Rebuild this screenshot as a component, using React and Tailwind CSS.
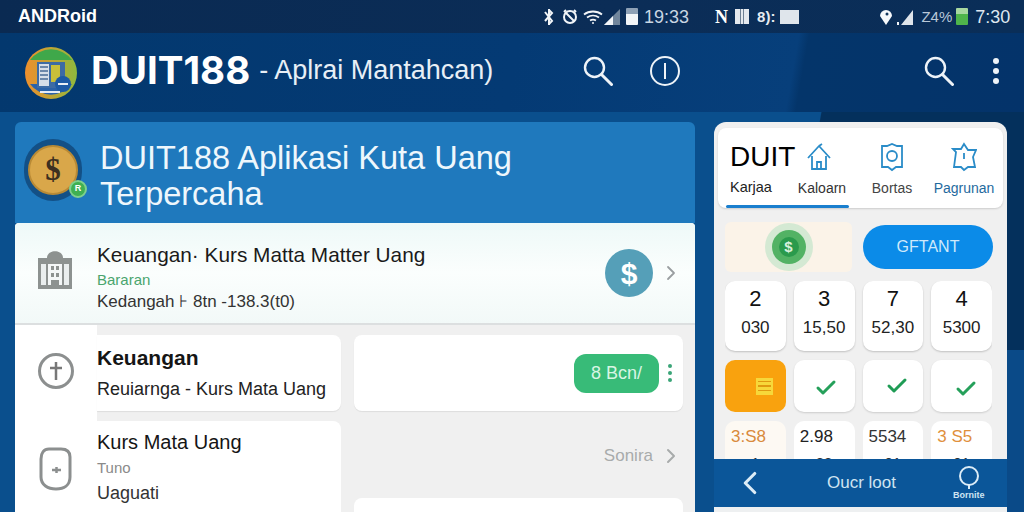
import React from 'react';
import { ChevronRight, ChevronLeft, Check } from 'lucide-react';

const SearchIcon = () => (
  <svg width="30" height="30" viewBox="0 0 30 30" fill="none" stroke="#eef3f8" strokeWidth="2.400" strokeLinecap="round">
    <circle cx="11.500" cy="11.500" r="9.500" />
    <path d="M18.500 18.500L28.500 28.500" strokeWidth="3" />
  </svg>
);

const StatusIcons = () => (
  <div className="flex items-center">
    <svg width="14" height="18" viewBox="0 0 14 18" className="ml-[542px]" fill="none" stroke="#f2f5f8" strokeWidth="2">
      <path d="M7 1v16M3 4l7 9-3 3M3 13l7-8-3-3" />
    </svg>
    <svg width="16" height="16" viewBox="0 0 16 16" className="ml-[6px]" fill="none" stroke="#f2f5f8" strokeWidth="2">
      <circle cx="8" cy="8" r="6" />
      <path d="M4 4l8 8M2 3l2-2M14 3l-2-2" />
    </svg>
    <svg width="20" height="14" viewBox="0 0 20 14" className="ml-[5px]" fill="none" stroke="#f2f5f8" strokeWidth="1.8">
      <path d="M1 4.500c5-4 13-4 18 0M4 7.500c3.500-2.500 8.500-2.500 12 0M7 10.500c2-1.200 4-1.200 6 0" />
      <circle cx="10" cy="13" r="1" fill="#f2f5f8" stroke="none" />
    </svg>
    <svg width="16" height="16" viewBox="0 0 16 16" className="ml-[1px]">
      <path d="M0 16L16 0v16z" fill="#71869c" />
      <path d="M0 16L9 7v9z" fill="#f2f5f8" />
    </svg>
    <div className="ml-[6px] w-[12px] h-[17px] bg-[#f2f5f8] rounded-[1px] border-t-[6px] border-[#8ea1b6]"></div>
    <span className="ml-[6px] text-[18px] leading-none text-[#c9d6e3]">19:33</span>
    <span className="ml-[26px] text-[18px] leading-none font-bold text-white font-['Liberation_Serif',serif]">N</span>
    <div className="ml-[7px] w-[14px] h-[15px] bg-[#e4e9ef] flex justify-center"><div className="w-[4px] h-full border-x border-[#6d7f93]"></div></div>
    <span className="ml-[8px] text-[15px] leading-none font-bold text-[#e6ebf1]">8):</span>
    <div className="ml-[5px] w-[19px] h-[14px] bg-[#dfe5eb]"></div>
    <svg width="14" height="16" viewBox="0 0 14 16" className="ml-[80px]">
      <path d="M7 16L1 7a5.500 5.500 0 1 1 12 0z" fill="#f7f9fb" />
      <circle cx="8" cy="5" r="1.500" fill="#14365c" />
    </svg>
    <svg width="18" height="16" viewBox="0 0 18 16" className="ml-[4px]">
      <path d="M0 16v-3h2v3z" fill="#f2f5f8" />
      <path d="M4 16L16 1v15z" fill="#dfe5eb" />
    </svg>
    <span className="ml-[6px] text-[15px] leading-none text-[#b9c8d8]">Z4%</span>
    <div className="ml-[4px] w-[12px] h-[17px] bg-[#4fb54b] rounded-[1px] border-t-[6px] border-[#a8d8a0]"></div>
    <span className="ml-[7px] text-[18px] leading-none text-[#dfe7ef]">7:30</span>
  </div>
);

const Logo = () => (
  <svg width="54" height="54" viewBox="0 0 54 54">
    <defs>
      <linearGradient id="lg" x1="0" y1="0" x2="1" y2="0">
        <stop offset="0" stopColor="#ef8f2c" />
        <stop offset="1" stopColor="#8fb93e" />
      </linearGradient>
    </defs>
    <circle cx="27" cy="27" r="26" fill="url(#lg)" />
    <path d="M6 14a26 26 0 0 1 42 0z" fill="#3fa84a" />
    <path d="M6 38h42a26 26 0 0 1-42 0z" fill="#2b62a8" />
    <rect x="13" y="16" width="28" height="26" fill="#3d6ba5" />
    <rect x="15" y="18" width="10" height="22" fill="#d7dee8" />
    <path d="M16 21h8M16 25h8M16 29h8M16 33h8" stroke="#4a6b95" strokeWidth="1.500" />
    <rect x="27" y="19" width="9" height="17" fill="#c9bf3a" />
    <circle cx="39" cy="38" r="8" fill="#1d5aa5" />
    <path d="M34 38h10" stroke="#e9eef5" strokeWidth="2" />
    <rect x="16" y="45" width="20" height="2" fill="#e5ecf5" />
  </svg>
);

const CoinBadge = () => (
  <div className="relative w-[58px] h-[62px] rounded-full bg-[#135086] flex items-center justify-center shrink-0">
    <div className="w-[50px] h-[50px] rounded-full bg-[#d9a74a] border-2 border-[#b98a35] flex items-center justify-center text-[31px] font-bold text-[#3d3020] font-['Liberation_Serif',serif]">$</div>
    <div className="absolute right-[-5px] bottom-[3px] w-[18px] h-[18px] rounded-full bg-[#3fb052] border-2 border-[#7fd08c] flex items-center justify-center text-[9px] font-bold text-white">R</div>
  </div>
);

const NumTile = ({ top, bottom }) => (
  <div className="h-[70px] rounded-[10px] bg-white shadow-[0_1px_2px_rgba(0,0,0,0.2)] flex flex-col items-center pt-[5px]">
    <span className="text-[22px] leading-[26px] text-[#111]">{top}</span>
    <span className="mt-[5px] text-[17px] leading-[22px] text-[#222]">{bottom}</span>
  </div>
);

const CheckTile = ({ cls }) => (
  <div className="h-[52px] rounded-[10px] bg-white shadow-[0_1px_2px_rgba(0,0,0,0.15)] flex items-center justify-center">
    <Check size={24} strokeWidth={3} className={cls} />
  </div>
);

const CutTile = ({ top, bottom, cls, bg }) => (
  <div className={`h-[60px] rounded-[10px] pt-[5px] px-[6px] flex flex-col ${bg}`}>
    <span className={`text-[17px] leading-[22px] ${cls}`}>{top}</span>
    <span className="mt-[5px] text-[15px] leading-[20px] text-center text-[#333]">{bottom}</span>
  </div>
);

const TopTab = ({ label, width, cls, children }) => (
  <div className={`flex flex-col items-center pt-[3px] ${width}`}>
    {children}
    <span className={`mt-[7px] text-[14px] leading-[16px] ${cls}`}>{label}</span>
  </div>
);

export default function App() {
  return (
    <div className="w-[1024px] h-[512px] overflow-hidden flex flex-col font-['Liberation_Sans',sans-serif] bg-[#0a4f8d]">
      <div className="h-[33px] shrink-0 bg-[linear-gradient(100deg,#0a2a52_0%,#0b2d57_60%,#0a2e58_100%)] flex items-center relative">
        <span className="absolute left-[18px] top-[6px] text-[18px] leading-[20px] font-bold text-white">ANDRoid</span>
        <StatusIcons />
      </div>

      <div className="h-[79px] shrink-0 flex items-center pb-[4px] bg-[linear-gradient(100deg,#03386e_0%,#043a74_50%,#073f7b_77%,#04356a_78%,#04336a_100%)]">
        <div className="ml-[24px] mt-[4px]"><Logo /></div>
        <span className="ml-[13px] text-[38.500px] leading-none font-bold text-white font-['Inter',sans-serif]">DUIT188</span>
        <span className="ml-[9px] text-[27px] leading-none text-[#e8eff6]">- Aplrai Mantahcan)</span>
        <div className="ml-[90px]"><SearchIcon /></div>
        <div className="ml-[37px] w-[30px] h-[30px] rounded-full border-2 border-[#eef3f8] flex items-center justify-center">
          <div className="w-[2px] h-[16px] bg-[#eef3f8]"></div>
        </div>
        <div className="ml-[244px]"><SearchIcon /></div>
        <div className="ml-[39px] flex flex-col gap-[4px]">
          <div className="w-[6px] h-[6px] rounded-full bg-[#eef3f8]"></div>
          <div className="w-[6px] h-[6px] rounded-full bg-[#eef3f8]"></div>
          <div className="w-[6px] h-[6px] rounded-full bg-[#eef3f8]"></div>
        </div>
      </div>

      <div className="flex-1 flex items-start pt-[10px] pl-[15px] bg-[linear-gradient(100deg,#0a4f8d_75%,#04305c_75.1%)]">
        <div className="w-[680px] h-[390px] shrink-0 flex flex-col">
          <div className="h-[101px] shrink-0 rounded-t-[6px] bg-[#1f79bd] flex items-start pt-[17px] pl-[9px]">
            <CoinBadge />
            <h1 className="ml-[18px] mt-[1px] text-[32.500px] leading-[36px] text-[#eef7fc]">DUIT188 Aplikasi Kuta Uang<br />Terpercaha</h1>
          </div>

          <div className="flex-1 bg-[#f0f0f0] rounded-t-[4px] flex flex-col overflow-hidden">
            <div className="h-[102px] shrink-0 bg-[linear-gradient(180deg,#eef9f8_0%,#fbfefd_50%,#f2f9f8_100%)] border-b-2 border-[#dcdfe0] flex items-center">
              <svg width="34" height="38" viewBox="0 0 34 38" className="ml-[23px] shrink-0 mt-[-6px]">
                <path d="M0 7h34v31H0z" fill="#8d9290" />
                <path d="M9 7c0-9 16-9 16 0z" fill="#8d9290" />
                <path d="M3 13h5v21H3zM26 13h5v21h-5z" fill="#eaeeee" />
                <path d="M10 13h14v21H10z" fill="#f4f7f7" />
                <path d="M13 15h3v4h-3zM18 15h3v4h-3zM13 22h3v4h-3zM18 22h3v4h-3zM13 29h8v5h-8z" fill="#8d9290" />
              </svg>
              <div className="ml-[25px] flex-1 flex flex-col mt-[8px]">
                <span className="text-[20.800px] leading-[28px] text-[#1a1a1a]">Keuangan· Kurs Matta Matter Uang</span>
                <span className="mt-[1px] text-[15px] leading-[20px] text-[#4aa56e]">Bararan</span>
                <span className="text-[17px] leading-[24px] text-[#333]">Kedangah ⊦ 8tn -138.3(t0)</span>
              </div>
              <div className="w-[48px] h-[48px] rounded-full bg-[#559fb8] flex items-center justify-center text-[30px] font-bold text-white">$</div>
              <ChevronRight size={24} strokeWidth={1.800} className="ml-[6px] mr-[12px] text-[#9a9ea0]" />
            </div>

            <div className="flex-1 flex">
              <div className="w-[82px] shrink-0 bg-white flex flex-col items-center">
                <svg width="36" height="36" viewBox="0 0 36 36" className="mt-[28px]" fill="none" stroke="#8c8f8f" strokeWidth="3">
                  <circle cx="18" cy="18" r="16.500" />
                  <path d="M18 9v18M12 15h12" stroke="#777" strokeWidth="2.500" />
                </svg>
                <svg width="34" height="44" viewBox="0 0 34 44" className="mt-[58px]" fill="none" stroke="#8c8f8f" strokeWidth="3">
                  <path d="M10 2h12c6 0 9 3 9 8v20c0 8-6 12-14 12S2 38 2 30V12C2 6 5 2 10 2z" />
                  <path d="M13 23h9M17.500 20v6" strokeWidth="2.500" />
                </svg>
              </div>
              <div className="w-[244px] shrink-0 pt-[10px] flex flex-col gap-[10px]">
                <div className="h-[76px] bg-white rounded-r-[8px] shadow-[0_1px_1px_rgba(0,0,0,0.08)] flex flex-col justify-center">
                  <span className="text-[21px] leading-[26px] font-bold text-[#151515]">Keuangan</span>
                  <span className="mt-[5px] text-[18px] leading-[26px] text-[#222]">Reuiarnga - Kurs Mata Uang</span>
                </div>
                <div className="h-[92px] bg-white rounded-tr-[8px] flex flex-col pt-[8px]">
                  <span className="text-[20px] leading-[26px] text-[#151515]">Kurs Mata Uang</span>
                  <span className="mt-[3px] text-[15px] leading-[20px] text-[#8a8a8a]">Tuno</span>
                  <span className="mt-[3px] text-[18px] leading-[24px] text-[#333]">Uaguati</span>
                </div>
              </div>
              <div className="ml-[13px] w-[329px] shrink-0 pt-[10px] flex flex-col">
                <div className="h-[76px] shrink-0 bg-white rounded-[8px] shadow-[0_1px_1px_rgba(0,0,0,0.08)] flex items-center justify-end">
                  <div className="w-[85px] h-[39px] rounded-[12px] bg-[#38bb78] flex items-center justify-center text-[18px] text-[#d8f5e4]">8 Bcn/</div>
                  <div className="ml-[9px] mr-[11px] flex flex-col gap-[3px]">
                    <div className="w-[4px] h-[4px] rounded-full bg-[#3aa578]"></div>
                    <div className="w-[4px] h-[4px] rounded-full bg-[#3aa578]"></div>
                    <div className="w-[4px] h-[4px] rounded-full bg-[#3aa578]"></div>
                  </div>
                </div>
                <div className="h-[87px] shrink-0 flex items-center justify-end text-[#a8abab]">
                  <span className="text-[17px] mt-[3px]">Sonira</span>
                  <ChevronRight size={24} strokeWidth={2} className="ml-[6px] mt-[3px]" />
                </div>
                <div className="h-[20px] bg-white rounded-t-[8px]"></div>
              </div>
            </div>
          </div>
        </div>

        <div className="ml-[19px] w-[293px] h-[390px] shrink-0 rounded-t-[12px] bg-[#f0f0f0] flex flex-col overflow-hidden">
          <div className="mx-[4px] mt-[6px] h-[80px] shrink-0 bg-white rounded-[8px] shadow-[0_1px_2px_rgba(0,0,0,0.15)] flex flex-col">
            <div className="flex-1 flex pt-[10px] pl-[12px]">
              <div className="flex flex-col w-[62px]">
                <span className="text-[28px] leading-[38px] text-black whitespace-nowrap">DUIT</span>
                <span className="mt-[3px] text-[14.500px] leading-[16px] text-[#222]">Karjaa</span>
              </div>
              <TopTab label="Kaloarn" width="w-[60px]" cls="text-[#333]">
                <svg width="24" height="32" viewBox="0 0 24 28" fill="none" stroke="#2a8cc8" strokeWidth="1.800" className="mr-[6px]">
                  <path d="M1 15L12 3l11 12M5 13v13h14V13M10 26v-7h4v7M12 3l3-2" />
                </svg>
              </TopTab>
              <TopTab label="Bortas" width="w-[80px]" cls="text-[#444]">
                <svg width="26" height="32" viewBox="0 0 26 30" fill="none" stroke="#2a8cc8" strokeWidth="1.800">
                  <path d="M3 4h5l5-2 5 2h5v21h-6l-4 3-4-3H3z" />
                  <circle cx="13" cy="14" r="5" />
                </svg>
              </TopTab>
              <TopTab label="Pagrunan" width="w-[64px]" cls="text-[#1f6a9e]">
                <svg width="26" height="32" viewBox="0 0 26 30" fill="none" stroke="#2a8cc8" strokeWidth="1.800">
                  <path d="M13 2l4 6h8l-3 7 2 10h-7l-4 3-3-3H3l2-15-3-3h8z" />
                  <path d="M13 11v6" />
                </svg>
              </TopTab>
            </div>
            <div className="ml-[8px] w-[123px] h-[3px] bg-[#1a7fce] rounded-full"></div>
          </div>

          <div className="ml-[11px] mt-[14px] flex items-center gap-[11px] shrink-0">
            <div className="w-[127px] h-[50px] rounded-[6px] bg-[#fbf3e8] flex items-center justify-center">
              <div className="w-[48px] h-[48px] rounded-full bg-[#d4e9d3] flex items-center justify-center">
                <div className="w-[34px] h-[34px] rounded-full bg-[#52b264] flex items-center justify-center">
                  <div className="w-[20px] h-[20px] rounded-full bg-[#2a9a4c] flex items-center justify-center text-[15px] font-bold text-[#d8f0dc]">$</div>
                </div>
              </div>
            </div>
            <div className="w-[130px] h-[44px] rounded-full bg-[#0b8be8] flex items-center justify-center text-[16px] text-[#cfe9fb]">GFTANT</div>
          </div>

          <div className="ml-[11px] mr-[15px] mt-[9px] grid grid-cols-4 gap-x-[8px] gap-y-[9px] flex-1 min-h-0 overflow-hidden content-start">
            <NumTile top="2" bottom="030" />
            <NumTile top="3" bottom="15,50" />
            <NumTile top="7" bottom="52,30" />
            <NumTile top="4" bottom="5300" />
            <div className="h-[52px] rounded-[10px] bg-[#f9a20e] flex items-center justify-end pr-[13px]">
              <div className="w-[17px] h-[17px] bg-[#f7d83a] flex flex-col justify-around p-[2px]">
                <div className="h-[1.500px] bg-[#e09a10]"></div>
                <div className="h-[1.500px] bg-[#e09a10]"></div>
                <div className="h-[1.500px] bg-[#e09a10]"></div>
              </div>
            </div>
            <CheckTile cls="text-[#25a05a] ml-[4px] mt-[4px]" />
            <CheckTile cls="text-[#1f9c55] ml-[8px]" />
            <CheckTile cls="text-[#25a05a] ml-[8px] mt-[6px]" />
            <CutTile top="3:S8" bottom="1" cls="text-[#d98a3c]" bg="bg-[#fdf9f3]" />
            <CutTile top="2.98" bottom="88" cls="text-[#222]" bg="bg-white" />
            <CutTile top="5534" bottom="01" cls="text-[#333]" bg="bg-white" />
            <CutTile top="3 S5" bottom="01" cls="text-[#e0903c]" bg="bg-white" />
          </div>

          <div className="h-[48px] shrink-0 bg-[#0b5699] flex items-center">
            <ChevronLeft size={38} strokeWidth={2} className="ml-[17px] text-[#dcecf7]" />
            <span className="ml-[58px] text-[17px] text-[#cfe4f2]">Oucr loot</span>
            <div className="ml-[57px] flex flex-col items-center">
              <svg width="22" height="24" viewBox="0 0 22 24" fill="none" stroke="#dcecf7" strokeWidth="2">
                <circle cx="11" cy="10" r="9" />
                <path d="M11 19v4" />
              </svg>
              <span className="text-[9px] leading-[10px] font-bold text-[#cfe4f2]">Bornite</span>
            </div>
          </div>
          <div className="h-[5px] shrink-0 bg-[#eef0f1]"></div>
        </div>

        <div className="w-[17px] h-[390px] shrink-0 flex flex-col">
          <div className="h-[228px] shrink-0 bg-[#04305c]"></div>
          <div className="flex-1 bg-[#0a4a88]"></div>
        </div>
      </div>
    </div>
  );
}
